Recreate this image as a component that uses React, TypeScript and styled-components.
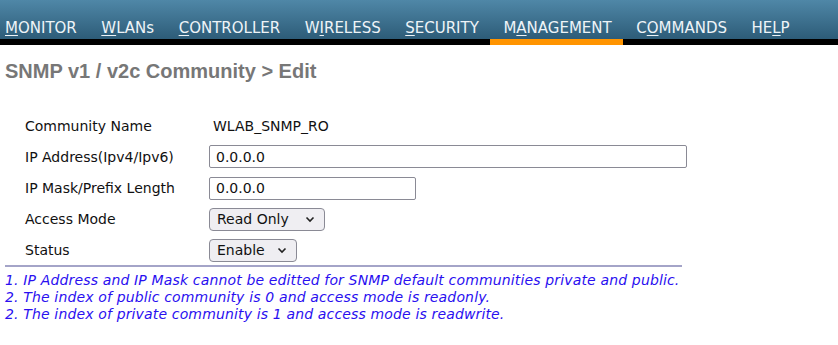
import styled, { createGlobalStyle } from 'styled-components'

const GlobalStyle = createGlobalStyle`
  body {
    margin: 0;
    background: #ffffff;
    font-family: "DejaVu Sans", Verdana, sans-serif;
  }
`

const navItems = [
  { pre: '', u: 'M', post: 'ONITOR' },
  { pre: '', u: 'W', post: 'LANs' },
  { pre: '', u: 'C', post: 'ONTROLLER' },
  { pre: 'W', u: 'I', post: 'RELESS' },
  { pre: '', u: 'S', post: 'ECURITY' },
  { pre: 'M', u: 'A', post: 'NAGEMENT', active: true },
  { pre: 'C', u: 'O', post: 'MMANDS' },
  { pre: 'HE', u: 'L', post: 'P' },
]

function App() {
  return (
    <>
      <GlobalStyle />
      <Page>
        <NavBar>
          {navItems.map((item) => (
            <NavItem key={item.pre + item.u + item.post} $active={item.active}>
              {item.pre}
              <u>{item.u}</u>
              {item.post}
            </NavItem>
          ))}
        </NavBar>
        <Title>SNMP v1 / v2c Community &gt; Edit</Title>
        <Form>
          <Row>
            <Label>Community Name</Label>
            <Value>WLAB_SNMP_RO</Value>
          </Row>
          <Row>
            <Label>IP Address(Ipv4/Ipv6)</Label>
            <TextInput $width={478} defaultValue="0.0.0.0" />
          </Row>
          <Row>
            <Label>IP Mask/Prefix Length</Label>
            <TextInput $width={207} defaultValue="0.0.0.0" />
          </Row>
          <Row>
            <Label>Access Mode</Label>
            <Select $width={116}>
              Read Only
              <Chevron />
            </Select>
          </Row>
          <Row>
            <Label>Status</Label>
            <Select $width={88}>
              Enable
              <Chevron />
            </Select>
          </Row>
        </Form>
        <Notes>
          <div>1. IP Address and IP Mask cannot be editted for SNMP default communities private and public.</div>
          <div>2. The index of public community is 0 and access mode is readonly.</div>
          <div>2. The index of private community is 1 and access mode is readwrite.</div>
        </Notes>
      </Page>
    </>
  )
}

function Chevron() {
  return (
    <svg width="10" height="7" viewBox="0 0 10 7">
      <path d="M1.5 1.5 L5 5 L8.5 1.5" fill="none" stroke="#222" strokeWidth="1.6" />
    </svg>
  )
}

export default App

const Page = styled.div`
  width: 838px;
  height: 345px;
  background: #fff;
`

const NavBar = styled.nav`
  display: flex;
  gap: 24.5px;
  height: 39px;
  padding-left: 5px;
  background: linear-gradient(#4f87a7, #2d5c78);
  border-bottom: 6px solid #000;
`

const NavItem = styled.div<{ $active?: boolean }>`
  position: relative;
  display: flex;
  align-items: flex-end;
  padding-bottom: 2px;
  color: #eef4f8;
  font-size: 15px;
  white-space: nowrap;

  u {
    text-decoration-thickness: 1px;
    text-underline-offset: 2px;
  }

  &::after {
    content: '';
    display: ${(p) => (p.$active ? 'block' : 'none')};
    position: absolute;
    left: -13px;
    right: -11px;
    bottom: -6px;
    height: 6px;
    background: #ff9400;
  }
`

const Title = styled.h1`
  margin: 0;
  padding: 15px 0 0 5px;
  font-family: "Liberation Sans", Arial, sans-serif;
  font-size: 20px;
  font-weight: bold;
  color: #777777;
`

const Form = styled.div`
  display: flex;
  flex-direction: column;
  margin: 27px 156px 0 5px;
  padding: 0 0 0 20px;
  border-bottom: 2px solid #a4a4c8;
`

const Row = styled.div`
  display: grid;
  grid-template-columns: 184px 1fr;
  align-items: center;
  height: 31.25px;

  &:last-child {
    height: 30px;
  }
`

const Label = styled.div`
  font-size: 14px;
  color: #111;
`

const Value = styled.div`
  padding-left: 4px;
  font-size: 14px;
  color: #111;
`

const TextInput = styled.input<{ $width: number }>`
  box-sizing: border-box;
  width: ${(p) => p.$width}px;
  height: 23px;
  padding: 0 6px;
  border: 1px solid #8a8a95;
  border-radius: 2px;
  font-family: "DejaVu Sans", Verdana, sans-serif;
  font-size: 14px;
  color: #111;
  outline: none;
`

const Select = styled.div<{ $width: number }>`
  box-sizing: border-box;
  display: flex;
  align-items: center;
  justify-content: space-between;
  width: ${(p) => p.$width}px;
  height: 23px;
  padding: 0 9px 0 7px;
  border: 1px solid #8a8a95;
  border-radius: 4px;
  background: #efeef2;
  font-size: 14px;
  color: #111;
`

const Notes = styled.div`
  padding: 5px 0 0 5px;
  font-size: 14px;
  font-style: italic;
  letter-spacing: 0.15px;
  line-height: 17px;
  color: #2a0ff0;
  white-space: nowrap;
`
